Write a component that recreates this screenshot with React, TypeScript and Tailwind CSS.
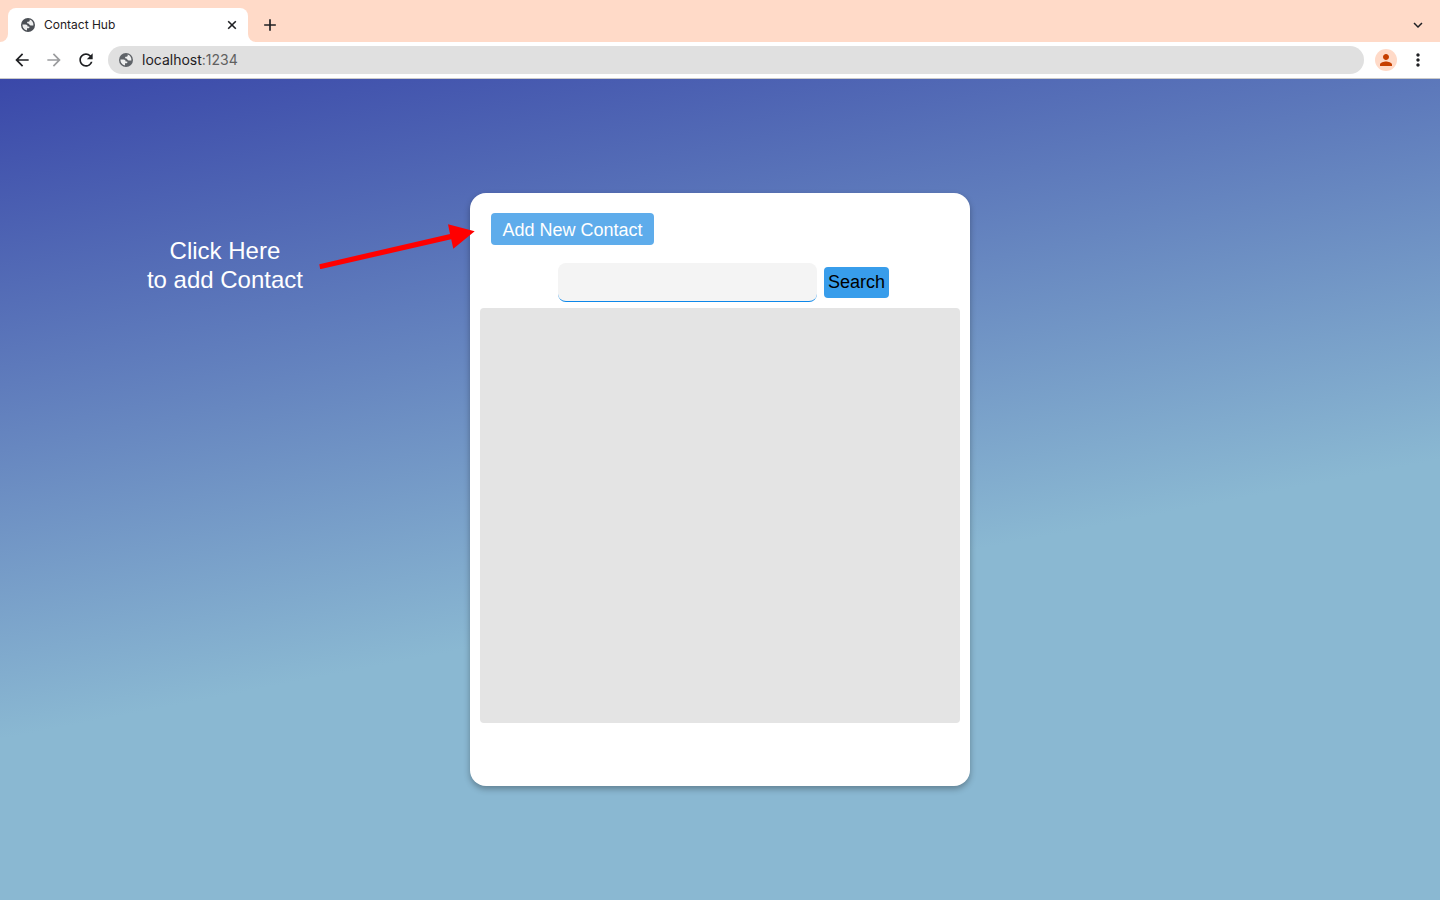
import React from "react";
import {
  MdAdd,
  MdArrowBack,
  MdArrowForward,
  MdExpandMore,
  MdMoreVert,
  MdPerson,
  MdRefresh,
} from "react-icons/md";

function GlobeIcon({ className }: { className: string }) {
  return (
    <svg viewBox="0 0 14 14" className={className} aria-hidden="true">
      <circle cx="7" cy="7" r="7" fill="currentColor" />
      <path
        d="M8.600 1.600C9 2.600 8.600 3.700 7.500 3.700H6.600C6.200 3.700 6.100 4 6.100 4.400C6.100 5.100 6.600 5.300 7.200 5.500C8.200 5.800 8.400 6.500 8.700 7.100C9 7.700 9.700 7.500 10.400 7.500H12.400C12.700 4.700 11.200 2.400 8.600 1.600Z M1.500 6.600H4.600C5.900 6.600 6.500 7.300 6.600 8.400H7.900C8.300 8.400 8.500 8.700 8.500 9.100C8.500 10 7.800 10.300 6.900 10.300H6V12.400C3.200 12 1.200 9.500 1.500 6.600Z"
        fill="white"
        fillOpacity="0.9"
      />
    </svg>
  );
}

function CloseIcon() {
  return (
    <svg viewBox="0 0 14 14" className="size-[14px]" aria-hidden="true">
      <path d="M3.200 3.200L10.800 10.800M10.800 3.200L3.200 10.800" stroke="currentColor" strokeWidth="1.600" fill="none" />
    </svg>
  );
}

function TabStrip() {
  return (
    <div className="flex h-[42px] items-end bg-[#ffdac8] pr-3">
      <div className="flex h-[34px] w-2 bg-white">
        <div className="flex-1 rounded-br-lg bg-[#ffdac8]" />
      </div>
      <div className="flex h-[34px] w-60 items-center rounded-t-lg bg-white pr-2 pl-[13px]">
        <GlobeIcon className="size-[14px] text-[#4b4f55]" />
        <span className="ml-[9px] flex-1 text-[12px] text-[#1f2023]">Contact Hub</span>
        <button type="button" aria-label="Close tab" className="flex size-4 items-center justify-center text-[#1f2023]">
          <CloseIcon />
        </button>
      </div>
      <div className="flex h-[34px] w-2 bg-white">
        <div className="flex-1 rounded-bl-lg bg-[#ffdac8]" />
      </div>
      <div className="flex h-[34px] flex-1 items-center justify-between pl-1">
        <button type="button" aria-label="New tab" className="flex size-5 items-center justify-center text-[#1f2023]">
          <MdAdd className="size-5" />
        </button>
        <button type="button" aria-label="Search tabs" className="flex size-5 items-center justify-center text-[#1f2023]">
          <MdExpandMore className="size-[18px]" />
        </button>
      </div>
    </div>
  );
}

function Toolbar() {
  return (
    <div className="flex h-[37px] items-center border-b border-[#c9c9c9] bg-white pr-3 pl-3">
      <div className="flex gap-3 text-[#1f2023]">
        <button type="button" aria-label="Back" className="size-5">
          <MdArrowBack className="size-5" />
        </button>
        <button type="button" aria-label="Forward" className="size-5 text-[#9b9c9e]">
          <MdArrowForward className="size-5" />
        </button>
        <button type="button" aria-label="Reload" className="size-5">
          <MdRefresh className="size-5" />
        </button>
      </div>
      <div className="ml-3 flex h-7 flex-1 items-center rounded-full bg-[#e0e0e0] px-[11px]">
        <GlobeIcon className="size-[14px] text-[#5f6368]" />
        <span className="ml-[9px] text-[14px] leading-[18px] text-[#1f2023]">
          localhost<span className="text-[#606060]">:1234</span>
        </span>
      </div>
      <button
        type="button"
        aria-label="Profile"
        className="ml-[11px] flex size-[22px] items-center justify-center rounded-full bg-[#ffdac8] text-[#c63f00]"
      >
        <MdPerson className="size-[18px]" />
      </button>
      <button type="button" aria-label="Menu" className="ml-[11px] size-5 text-[#1f2023]">
        <MdMoreVert className="size-5" />
      </button>
    </div>
  );
}

function Arrow() {
  return (
    <svg viewBox="0 0 156 46" className="h-[46px] w-[156px]" aria-hidden="true">
      <path d="M0.300 41.200L131 11L129 1.200L155.700 8.300L134.300 25.700L132.200 16.300L1.200 46.200Z" fill="red" />
    </svg>
  );
}

function ContactCard() {
  return (
    <section className="relative flex w-full max-w-[500px] flex-col rounded-2xl bg-white px-[10px] pt-5 pb-[63px] shadow-[0_3px_6px_rgba(0,0,0,0.3)]">
      <div className="absolute top-[30px] right-full -mr-[5px] flex items-start gap-4">
        <p className="mt-[13px] text-center text-[24px] leading-[29px] whitespace-nowrap text-white">
          Click Here
          <br />
          to add Contact
        </p>
        <Arrow />
      </div>
      <button
        type="button"
        className="ml-[11px] h-8 w-[163px] self-start rounded bg-[#5eaceb] pt-0.5 text-[18px] text-white"
      >
        Add New Contact
      </button>
      <form className="mt-[18px] ml-[7px] flex items-center justify-center gap-[7px]" onSubmit={(e) => e.preventDefault()}>
        <input
          type="text"
          aria-label="Search contacts"
          className="h-[39px] w-[259px] rounded-lg border-b border-[#0d87e9] bg-[#f4f4f4] px-3 text-[18px] outline-none"
        />
        <button type="submit" className="h-[31px] rounded bg-[#389deb] px-1 text-[18px] leading-[31px] text-black">
          Search
        </button>
      </form>
      <div className="mt-[6px] h-[415px] rounded bg-[#e4e4e4]" />
    </section>
  );
}

export default function App() {
  return (
    <div className="flex min-h-screen flex-col font-['Liberation_Sans',Arial,sans-serif]">
      <header className="font-['Inter',sans-serif]">
        <TabStrip />
        <Toolbar />
      </header>
      <main className="flex flex-1 items-center justify-center bg-[linear-gradient(169deg,#3a48a9_0%,#8ab8d2_60%)]">
        <ContactCard />
      </main>
    </div>
  );
}
